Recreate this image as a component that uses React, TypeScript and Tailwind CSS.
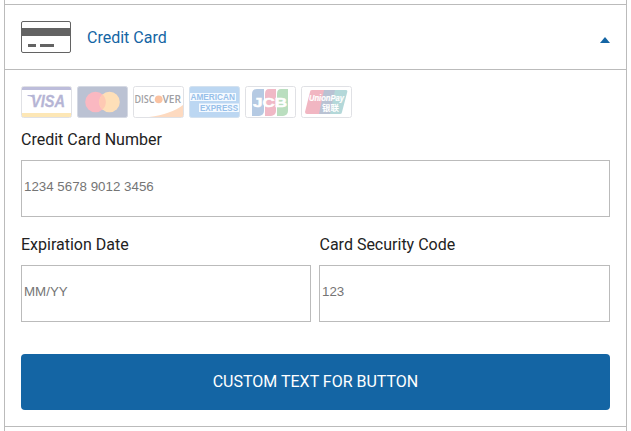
import type { ReactNode } from "react";

function CardFrame({ label, children }: { label: string; children: ReactNode }) {
  return (
    <svg className="h-8 w-[51px] shrink-0" viewBox="0 0 51 32" role="img" aria-label={label}>
      {children}
    </svg>
  );
}

function Outline() {
  return <rect x="0.5" y="0.5" width="50" height="31" rx="2" fill="none" stroke="#e0e1e5" />;
}

const logoFont = "'Open Sans', 'Liberation Sans', sans-serif";
const wideFont = "'Liberation Sans', Arial, sans-serif";

function Visa() {
  return (
    <CardFrame label="Visa">
      <path d="M1 1h49v3H1z" fill="#bdbddb" />
      <path d="M1 27h49v4H1z" fill="#fde7b6" />
      <text x="10" y="21" fontFamily={wideFont} fontSize="17" fontWeight="700" fontStyle="italic" fill="#b6b5d5" stroke="#b6b5d5" strokeWidth="0.3" textLength="34" lengthAdjust="spacingAndGlyphs">VISA</text>
      <path d="M6.5 9h6l1.5 5c-2-3-4-4-7.5-4z" fill="#b6b5d5" />
      <Outline />
    </CardFrame>
  );
}

function Mastercard() {
  return (
    <CardFrame label="Mastercard">
      <rect x="0.5" y="0.5" width="50" height="31" rx="2" fill="#bbc2d3" stroke="#d5d9e3" />
      <circle cx="18.5" cy="16" r="10.3" fill="#fab8c1" />
      <circle cx="32.5" cy="16" r="10.3" fill="#fedfb8" />
      <path d="M25.5 8.4a10.3 10.3 0 0 1 0 15.2a10.3 10.3 0 0 1 0-15.2z" fill="#fec9b3" />
    </CardFrame>
  );
}

function Discover() {
  return (
    <CardFrame label="Discover">
      <path d="M50 19v12H16C31 29 42 25 50 19z" fill="#fddac0" />
      <text x="1.5" y="17" fontFamily={logoFont} fontSize="10.5" fontWeight="600" fill="#a0a0a3" textLength="20" lengthAdjust="spacingAndGlyphs">DISC</text>
      <circle cx="25.7" cy="13.3" r="3.9" fill="#fac3a3" />
      <text x="29.5" y="17" fontFamily={logoFont} fontSize="10.5" fontWeight="600" fill="#a0a0a3" textLength="18.5" lengthAdjust="spacingAndGlyphs">VER</text>
      <Outline />
    </CardFrame>
  );
}

function Amex() {
  return (
    <CardFrame label="American Express">
      <rect x="0.5" y="0.5" width="50" height="31" rx="2" fill="#bcd7f2" stroke="#d3e1ef" />
      <path d="M1 7h46v8H1zM10 17.500h40V26H10z" fill="#f5faff" />
      <g fontFamily={wideFont} fontSize="9.5" fontWeight="700" fill="#97c0ea">
        <text x="1.5" y="14" textLength="44.500" lengthAdjust="spacingAndGlyphs">AMERICAN</text>
        <text x="11" y="25" textLength="38" lengthAdjust="spacingAndGlyphs">EXPRESS</text>
      </g>
    </CardFrame>
  );
}

function Jcb() {
  return (
    <CardFrame label="JCB">
      <path d="M12 3h7v22a5 5 0 0 1-5 5H7V8q0-5 5-5z" fill="#b5cae3" />
      <path d="M24 3h7v22a5 5 0 0 1-5 5h-6V8q0-5 4-5z" fill="#f0b9c6" />
      <path d="M36 3h7v22a5 5 0 0 1-5 5h-6V8q0-5 4-5z" fill="#badebf" />
      <text x="8" y="20.5" fontFamily={wideFont} fontSize="12.5" fontWeight="700" fill="#fff" stroke="#fff" strokeWidth="0.5" textLength="34" lengthAdjust="spacingAndGlyphs">JCB</text>
      <Outline />
    </CardFrame>
  );
}

function UnionPay() {
  return (
    <CardFrame label="UnionPay">
      <path d="M11 4h13l-5 24H6q-2 0-2-2L9 6q0-2 2-2z" fill="#f1b6c2" />
      <path d="M23 4h12l-5 24H18z" fill="#b9c2d3" />
      <path d="M34 4h11q2 0 1 3l-5 19q0 2-2 2H29z" fill="#b4d8d9" />
      <text x="8" y="15" fontFamily={wideFont} fontSize="9" fontWeight="700" fontStyle="italic" fill="#fff" stroke="#fff" strokeWidth="0.2" textLength="35" lengthAdjust="spacingAndGlyphs">UnionPay</text>
      <text x="21" y="24.5" fontFamily="'Noto Sans CJK SC', sans-serif" fontSize="8.5" fontWeight="700" fill="#fff">银联</text>
      <Outline />
    </CardFrame>
  );
}

function Field({ label, placeholder, className = "flex-1" }: { label: string; placeholder: string; className?: string }) {
  return (
    <label className={`flex min-w-0 flex-col gap-2 text-base text-[#222] ${className}`}>
      <span>{label}</span>
      <input
        className="h-[57px] w-full border border-[#bbb] bg-white px-0.5 pb-1 indent-0 font-['Liberation_Sans',Arial,sans-serif] text-[13.333px] placeholder:text-[#757575] focus:outline-none"
        placeholder={placeholder}
      />
    </label>
  );
}

export default function App() {
  return (
    <main className="h-[431px] w-[631px] overflow-hidden bg-white pr-1 pl-1 font-['Roboto',sans-serif]">
      <div className="flex h-full w-[623px] flex-col border-x border-[#bbb] pt-1">
        <header className="flex h-[65px] items-center border-t border-[#bbb] px-4">
          <svg className="h-8 w-[50px]" viewBox="0 0 50 32" aria-hidden="true">
            <rect x="0.5" y="0.5" width="49" height="31" rx="1.5" fill="#fff" stroke="#636363" />
            <path d="M0 7h50v8H0zM7 23h8v3H7zM19 23h14v3H19z" fill="#636363" />
          </svg>
          <span className="mt-0.5 ml-4 text-base text-[#1465a4]">Credit Card</span>
          <svg className="mt-1.5 ml-auto h-[6px] w-[10px]" viewBox="0 0 10 6" aria-hidden="true">
            <path d="M5 0l5 6H0z" fill="#1465a4" />
          </svg>
        </header>
        <form className="flex h-[357px] flex-col border-t border-[#bbb] px-4 pt-4">
          <div className="flex gap-[5px]">
            <Visa />
            <Mastercard />
            <Discover />
            <Amex />
            <Jcb />
            <UnionPay />
          </div>
          <div className="mt-2.5 flex">
            <Field label="Credit Card Number" placeholder="1234 5678 9012 3456" />
          </div>
          <div className="mt-4 flex gap-2">
            <Field label="Expiration Date" placeholder="MM/YY" className="w-[290px]" />
            <Field label="Card Security Code" placeholder="123" className="flex-1 indent-[0.5px]" />
          </div>
          <button type="button" className="mt-8 h-14 rounded bg-[#1465a4] text-base text-white">
            CUSTOM TEXT FOR BUTTON
          </button>
        </form>
        <div className="flex-1 border-t border-[#bbb]" />
      </div>
    </main>
  );
}
